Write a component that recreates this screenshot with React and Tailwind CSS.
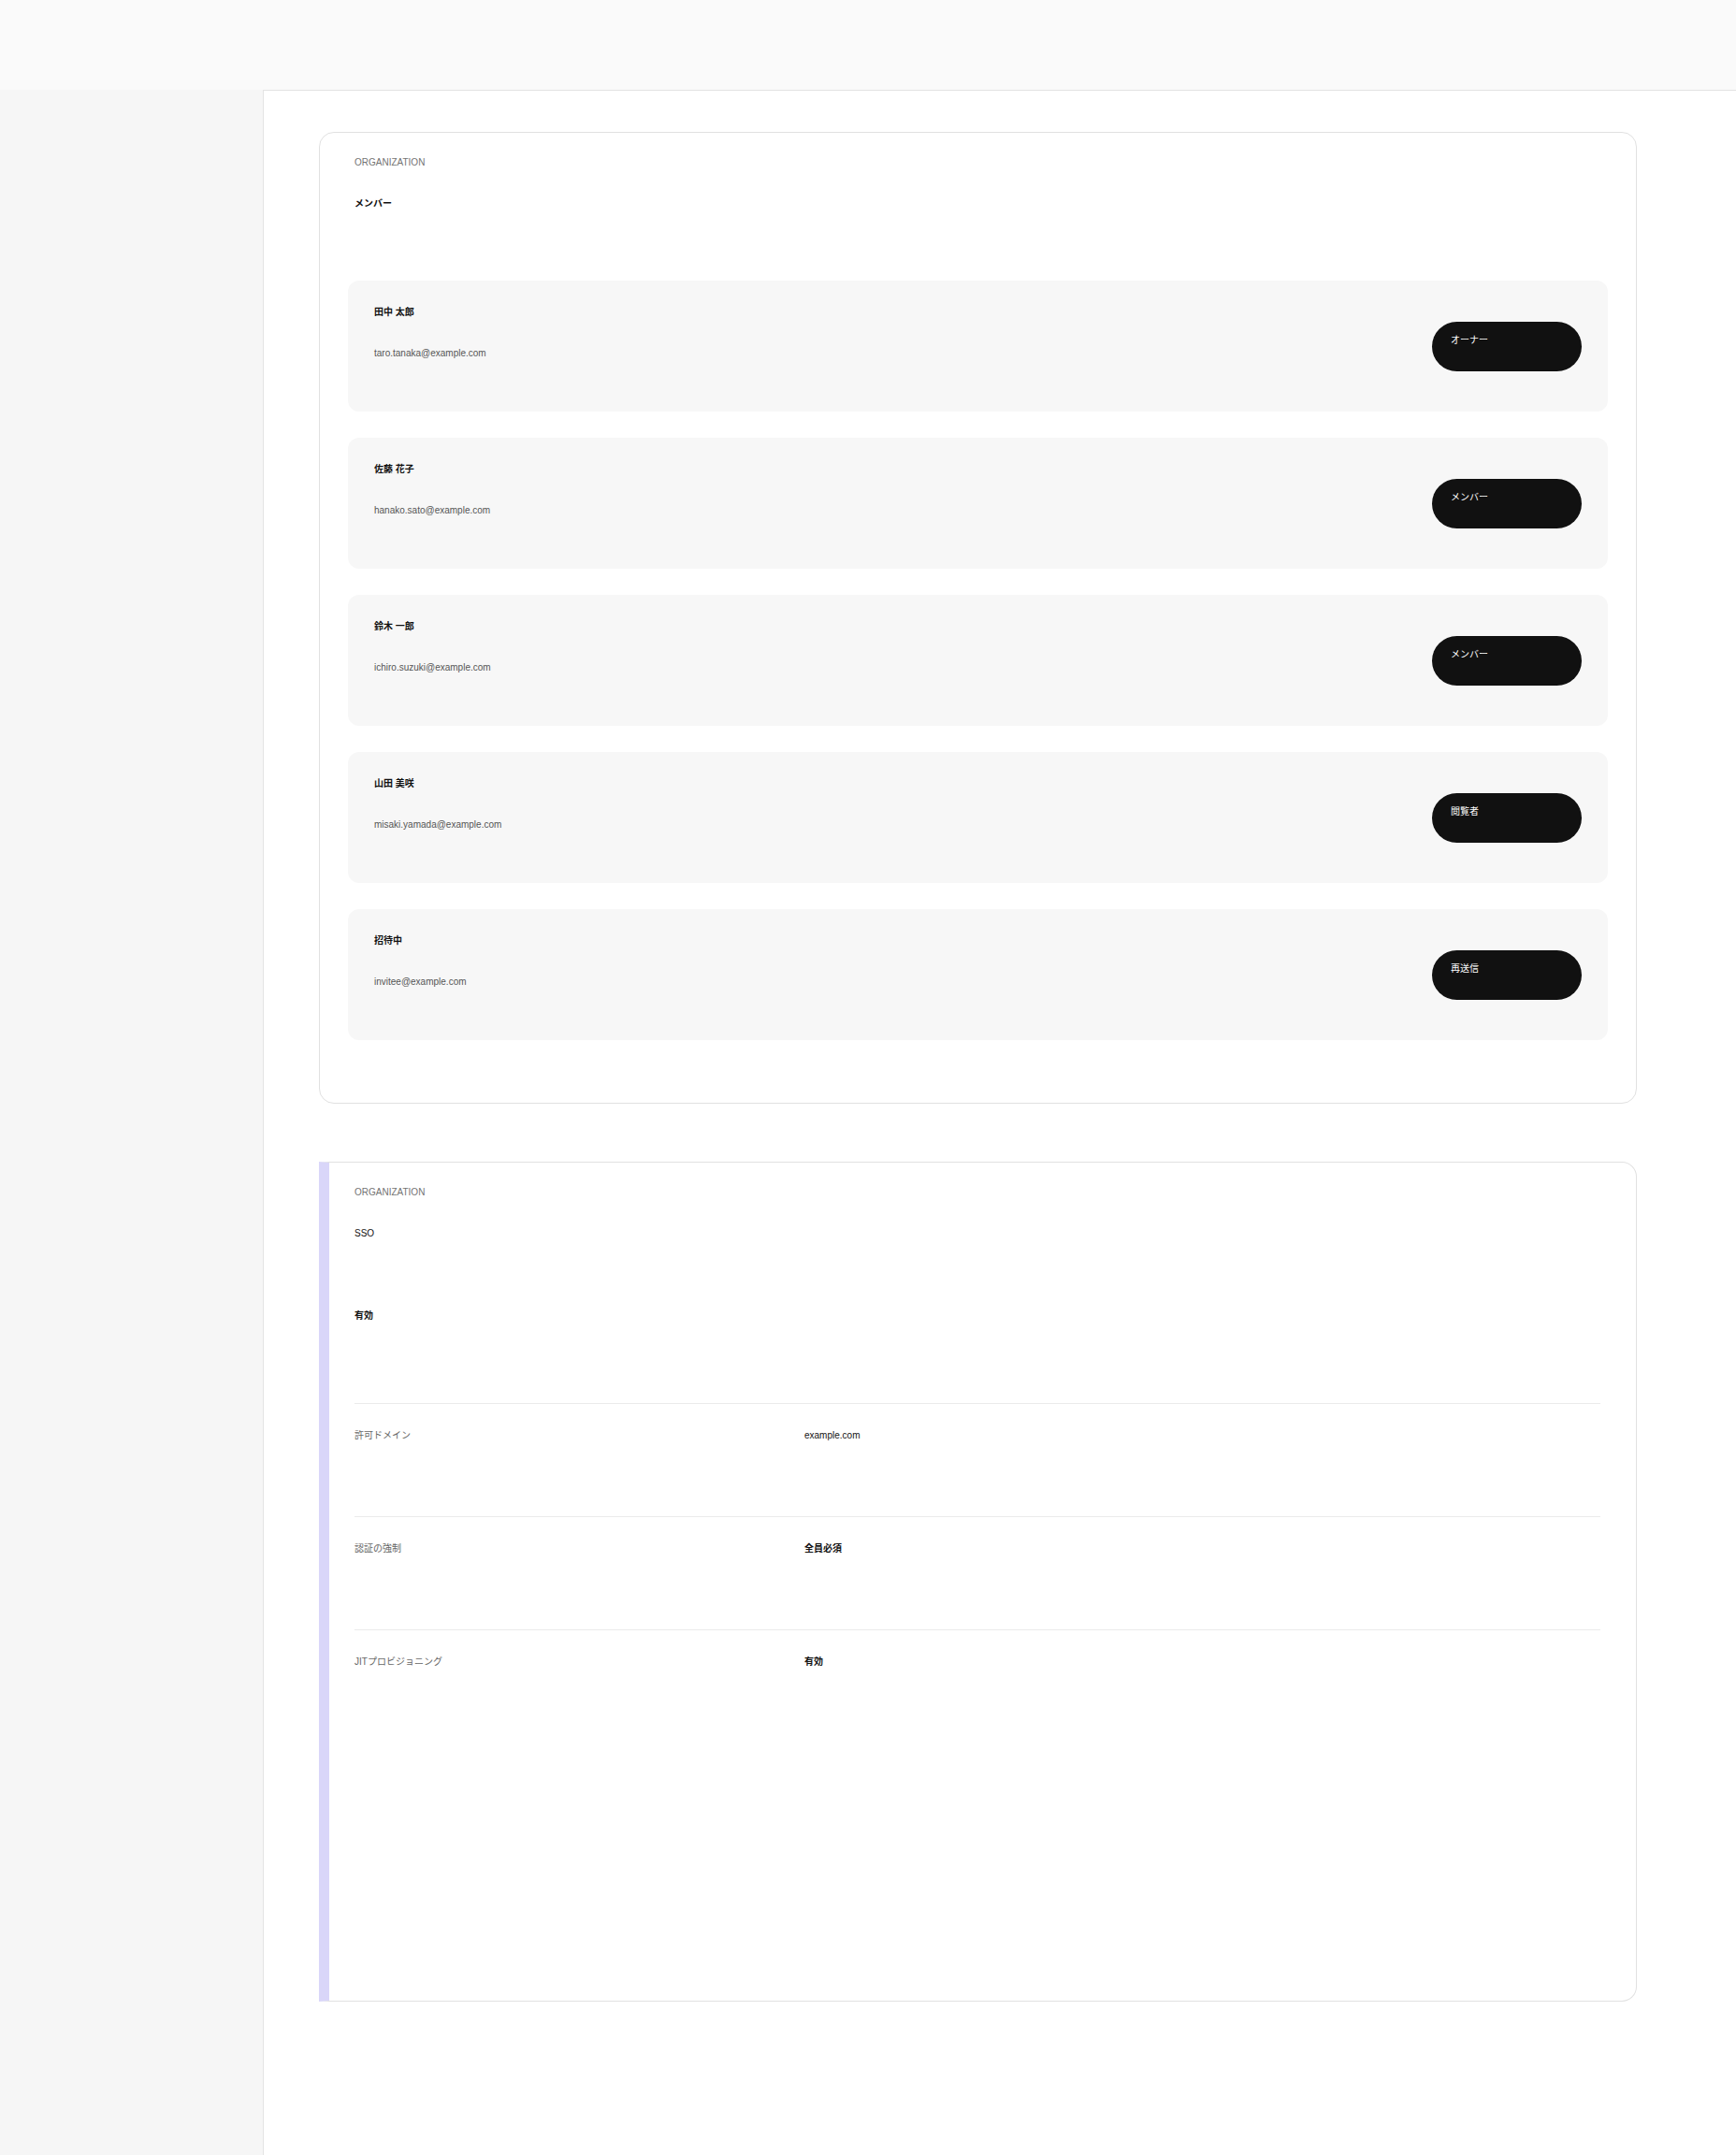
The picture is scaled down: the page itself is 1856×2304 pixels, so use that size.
export default function App() {
  const members = [
    { name: "田中 太郎", email: "taro.tanaka@example.com", role: "オーナー" },
    { name: "佐藤 花子", email: "hanako.sato@example.com", role: "メンバー" },
    { name: "鈴木 一郎", email: "ichiro.suzuki@example.com", role: "メンバー" },
    { name: "山田 美咲", email: "misaki.yamada@example.com", role: "閲覧者" },
    { name: "招待中", email: "invitee@example.com", role: "再送信" },
  ];
  const details = [
    { label: "許可ドメイン", value: "example.com", bold: false },
    { label: "認証の強制", value: "全員必須", bold: true },
    { label: "JITプロビジョニング", value: "有効", bold: true },
  ];
  return (
    <div className="min-h-screen flex flex-col bg-white text-[10px] leading-[15px] text-[#111] font-['Liberation_Sans','Noto_Sans_CJK_JP',sans-serif]">
      <header className="h-[96px] shrink-0 bg-[#fafafa]" />
      <div className="flex flex-1">
        <aside className="w-[282px] shrink-0 bg-[#f6f6f6] border-r border-[#e3e3e3]" />
        <main className="flex-1 border-t border-[#e3e3e3] pl-[59px] pt-[44px] pb-[120px]">
          <section className="w-[1409px] rounded-[16px] border border-[#e1e1e1] px-[30px] pt-[24px] pb-[67px]">
            <div className="pl-[7px]">
              <div className="text-[#737373]">ORGANIZATION</div>
              <h2 className="mt-[29px] font-bold text-[#111]">メンバー</h2>
            </div>
            <div className="mt-[75px] flex flex-col gap-[28px]">
              {members.map((m) => (
                <div
                  key={m.email}
                  className="flex justify-between items-center h-[140px] rounded-[12px] bg-[#f7f7f7] pl-[28px] pr-[28px]"
                >
                  <div className="self-start pt-[26px] flex flex-col">
                    <div className="font-bold text-[#111]">{m.name}</div>
                    <div className="mt-[29px] text-[#555]">{m.email}</div>
                  </div>
                  <button className="w-[160px] h-[53px] rounded-full bg-[#111] text-white flex items-start pl-[20px] pt-[12px] text-[10px] leading-[15px]">
                    {m.role}
                  </button>
                </div>
              ))}
            </div>
          </section>

          <section className="mt-[62px] w-[1409px] h-[898px] rounded-r-[16px] border border-[#e1e1e1] border-l-[11px] border-l-[#d9d6f9] pl-[27px] pr-[38px] pt-[24px]">
            <div className="text-[#737373]">ORGANIZATION</div>
            <h2 className="mt-[29px] text-[#111]">SSO</h2>
            <div className="mt-[73px] font-bold text-[#111]">有効</div>
            <div className="mt-[86px]">
              {details.map((d) => (
                <div
                  key={d.label}
                  className="grid grid-cols-[481px_1fr] h-[121px] border-t border-[#ebebeb] pt-[26px]"
                >
                  <div className="text-[#666]">{d.label}</div>
                  <div className={d.bold ? "font-bold text-[#111]" : "text-[#111]"}>{d.value}</div>
                </div>
              ))}
            </div>
          </section>
        </main>
      </div>
    </div>
  );
}
